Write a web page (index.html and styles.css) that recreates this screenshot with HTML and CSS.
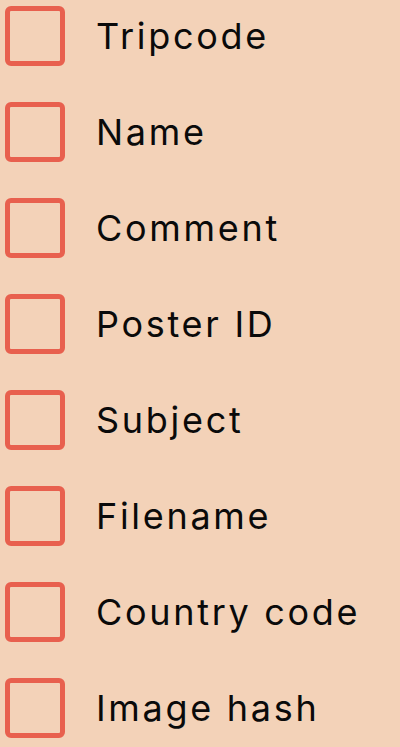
FILE: index.html
```html
<!DOCTYPE html>
<html lang="en">
<head>
  <meta charset="UTF-8">
  <meta name="viewport" content="width=device-width, initial-scale=1.0">
  <title>Filters</title>
  <link rel="stylesheet" href="styles.css">
</head>
<body>
  <ul class="options">
    <li class="option"><span class="box"></span><span class="label">Tripcode</span></li>
    <li class="option"><span class="box"></span><span class="label">Name</span></li>
    <li class="option"><span class="box"></span><span class="label">Comment</span></li>
    <li class="option"><span class="box"></span><span class="label">Poster ID</span></li>
    <li class="option"><span class="box"></span><span class="label">Subject</span></li>
    <li class="option"><span class="box"></span><span class="label">Filename</span></li>
    <li class="option"><span class="box"></span><span class="label">Country code</span></li>
    <li class="option"><span class="box"></span><span class="label">Image hash</span></li>
  </ul>
</body>
</html>
```

FILE: styles.css
```css
html, body {
  margin: 0;
  padding: 0;
  height: 100%;
  background-color: #f3d2b8;
  overflow: hidden;
}
body {
  font-family: Inter, 'Noto Sans', sans-serif;
  color: #0a0a0a;
}
.options {
  list-style: none;
  margin: 0;
  padding: 6px 0 0 5px;
  display: flex;
  flex-direction: column;
  gap: 36px;
}
.option {
  display: flex;
  align-items: center;
  height: 60px;
}
.box {
  box-sizing: border-box;
  width: 60px;
  height: 60px;
  border: 5px solid #e8604e;
  border-radius: 6px;
  flex-shrink: 0;
}
.label {
  margin-left: 31px;
  font-size: 36px;
  letter-spacing: 2.7px;
}
```
